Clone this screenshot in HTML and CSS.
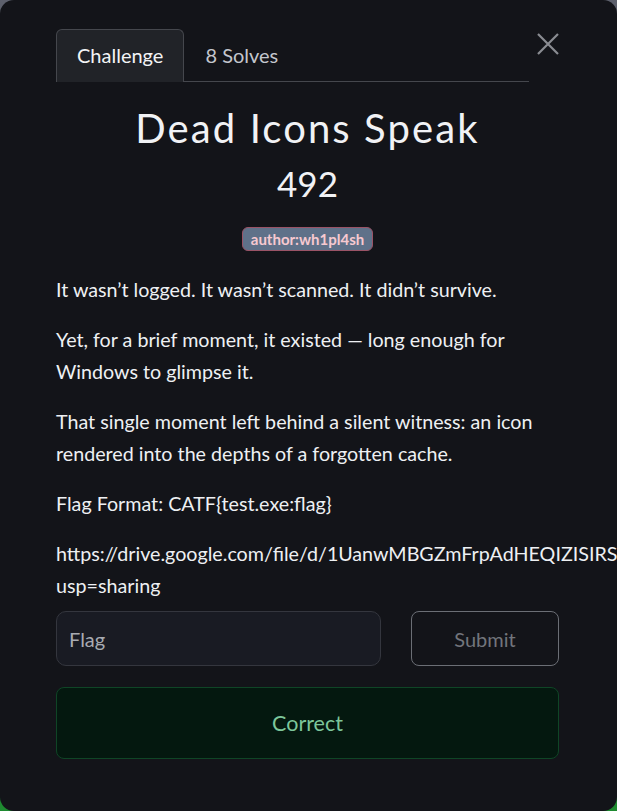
FILE: index.html
```html
<!DOCTYPE html>
<html lang="en">
<head>
<meta charset="utf-8">
<title>Dead Icons Speak</title>
<link rel="stylesheet" href="styles.css">
</head>
<body>
<div class="modal">
  <div class="header">
    <nav class="tabs">
      <a class="tab active">Challenge</a>
      <a class="tab">8 Solves</a>
    </nav>
    <button class="close" aria-label="Close">
      <svg width="22" height="22" viewBox="0 0 22 22"><path d="M1 1L21 21M21 1L1 21" stroke="#8a8c92" stroke-width="2.2" fill="none"/></svg>
    </button>
  </div>
  <h1 class="title">Dead Icons Speak</h1>
  <div class="points">492</div>
  <div class="tags"><span class="badge">author:wh1pl4sh</span></div>
  <div class="desc">
    <p>It wasn’t logged. It wasn’t scanned. It didn’t survive.</p>
    <p>Yet, for a brief moment, it existed — long enough for Windows to glimpse it.</p>
    <p>That single moment left behind a silent witness: an icon rendered into the depths of a forgotten cache.</p>
    <p>Flag Format: CATF{test.exe:flag}</p>
    <p class="url">https://drive.google.com/file/d/1UanwMBGZmFrpAdHEQIZISIRS5hVtqk2e/view?<wbr>usp=sharing</p>
  </div>
  <form class="submit-row">
    <input class="flag-input" type="text" placeholder="Flag">
    <button class="submit-btn" type="button">Submit</button>
  </form>
  <div class="result">Correct</div>
</div>
</body>
</html>
```
FILE: styles.css
```css
html, body {
  margin: 0;
  height: 811px;
  overflow: hidden;
}
body {
  background: linear-gradient(180deg, #5d606c 0%, #3a5a40 60%, #1e8a30 100%);
  font-family: Lato, "Noto Sans", sans-serif;
  color: #eef0f3;
}
.modal {
  box-sizing: border-box;
  height: 811px;
  background: #131419;
  border-radius: 14px;
  padding: 29px 58px 0 56px;
}
.header {
  display: flex;
  align-items: flex-start;
}
.tabs {
  display: flex;
  width: 473px;
  border-bottom: 1px solid #45474d;
}
.tab {
  display: block;
  height: 51px;
  line-height: 51px;
  padding: 0 20px;
  font-size: 20px;
  color: #c3c6cd;
  border: 1px solid transparent;
  border-bottom: none;
  border-radius: 6px 6px 0 0;
  margin-bottom: -1px;
}
.tab.active {
  background: #212328;
  border-color: #45474d;
  color: #f3f4f6;
  height: 52px;
}
.close {
  width: 30px;
  height: 30px;
  margin-top: 4px;
  padding: 0;
  border: none;
  background: none;
  display: flex;
  justify-content: flex-end;
}
.title {
  margin: 22px 0 0;
  text-align: center;
  font-size: 40px;
  line-height: 48px;
  font-weight: 400;
  letter-spacing: 2.1px;
  color: #f1f2f5;
}
.points {
  margin-top: 11px;
  text-align: center;
  font-size: 35px;
  line-height: 40px;
  font-weight: 400;
  color: #f1f2f5;
}
.tags {
  margin-top: 24px;
  text-align: center;
  height: 24px;
}
.badge {
  display: inline-block;
  box-sizing: border-box;
  height: 24px;
  line-height: 22px;
  padding: 0 8px;
  background: #5f7189;
  border: 1px solid #9a5366;
  border-radius: 6px;
  color: #f7c9d0;
  font-size: 15px;
  font-weight: 700;
}
.desc {
  margin-top: 23px;
}
.desc p {
  margin: 0 0 18px;
  font-size: 19.7px;
  line-height: 32px;
  color: #eef0f3;
}
.desc p.url {
  margin-bottom: 0;
  word-break: keep-all;
}
.submit-row {
  display: flex;
  gap: 30px;
  margin: 9px 0 0;
}
.flag-input {
  box-sizing: border-box;
  width: 325px;
  height: 55px;
  padding: 0 12px;
  background: #191b23;
  border: 1px solid #34363e;
  border-radius: 10px;
  font-family: Lato, "Noto Sans", sans-serif;
  font-size: 20px;
  color: #eef0f3;
  outline: none;
}
.flag-input::placeholder {
  color: #a8abb2;
}
.submit-btn {
  box-sizing: border-box;
  width: 148px;
  height: 55px;
  background: transparent;
  border: 1px solid #6b6e75;
  border-radius: 8px;
  font-family: Lato, "Noto Sans", sans-serif;
  font-size: 20px;
  color: #72757c;
}
.result {
  box-sizing: border-box;
  margin-top: 21px;
  height: 72px;
  line-height: 70px;
  text-align: center;
  background: #04180f;
  border: 1px solid #0f4526;
  border-radius: 8px;
  color: #7dc69b;
  font-size: 21.5px;
}
```
